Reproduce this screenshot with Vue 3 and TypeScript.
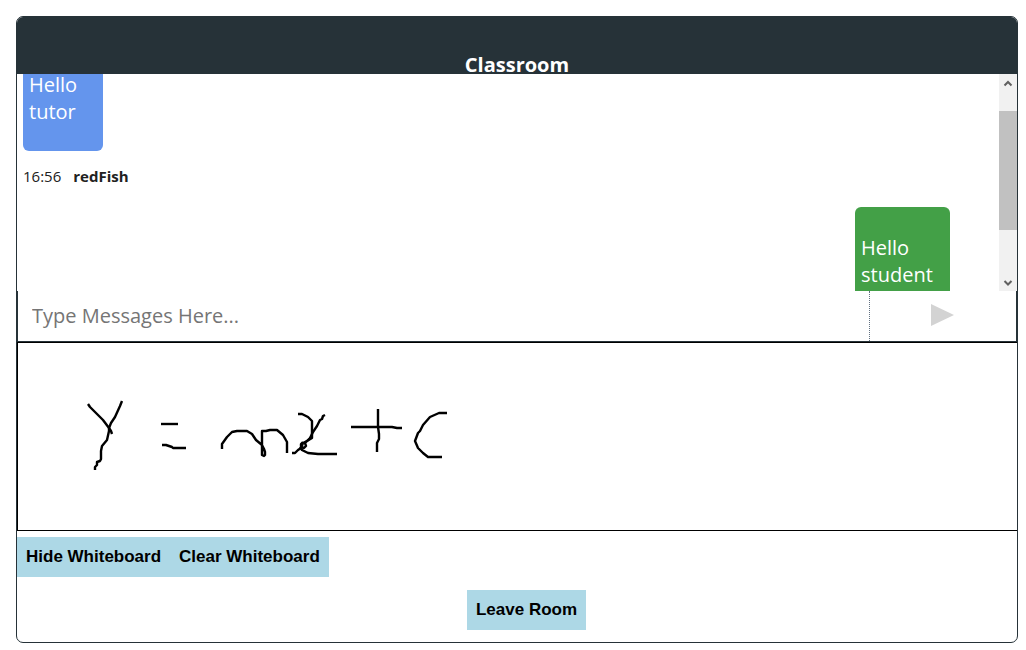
<script setup lang="ts">
import { computed, nextTick, onMounted, ref } from 'vue'

interface Message {
  text: string
  time: string
  author: string
  mine: boolean
}

const messages = ref<Message[]>([
  { text: 'Hello tutor', time: '16:56', author: 'redFish', mine: false },
  { text: 'Hello student', time: '', author: '', mine: true },
])

const draft = ref('')
const boardVisible = ref(true)
const list = ref<HTMLElement | null>(null)
const thumbTop = ref(0)
const thumbSize = ref(0)

const strokes = ref<string[]>([
  '70,61 72,64 77,69 85,77 88,81 91,85 93,88 94,91',
  '104,58 102,63 97,74 93,80 91,85 91,88 89,97 84,103 83,108 83,116 82,118 79,119 79,122 77,124 77,127',
  '143,81 160,81',
  '144,102 148,102 154,104 155,105 168,105',
  '204,106 204,101 209,94 214,89 219,88 229,88 234,91 238,97 244,102 246,106 247,109 247,112 246,113 244,112 244,88 248,88 252,87 259,87 265,92 269,99 269,110',
  '280,71 284,71 290,74 294,78 294,95 289,98 287,100 288,103 286,105 283,104 283,101 285,99',
  '307,72 305,73 304,76 302,77 299,83 295,89 292,95 289,98 285,100 283,105 280,107 277,110 274,110',
  '282,104 284,107 290,110 300,111 319,111',
  '333,84 374,84 379,85 384,85',
  '360,66 360,84 361,91 361,96 359,100 359,109',
  '429,70 421,70 412,74 405,82 402,88 400,90 397,98 400,105 405,110 410,114 424,114',
])

const thumbStyle = computed(() => ({
  top: `${thumbTop.value}%`,
  height: `${thumbSize.value}%`,
}))

function syncThumb() {
  const el = list.value
  if (!el) return
  thumbSize.value = (el.clientHeight / el.scrollHeight) * 100
  thumbTop.value = (el.scrollTop / el.scrollHeight) * 100
}

function scrollList(step: number) {
  list.value?.scrollBy({ top: step })
}

async function send() {
  if (!draft.value.trim()) return
  messages.value.push({ text: draft.value, time: '', author: '', mine: true })
  draft.value = ''
  await nextTick()
  syncThumb()
}

onMounted(() => {
  if (list.value) list.value.scrollTop = 34
  syncThumb()
})
</script>

<template>
  <main class="room">
    <header class="header">
      <h1 class="title">Classroom</h1>
    </header>

    <section class="chat">
      <div ref="list" class="messages" @scroll="syncThumb">
        <article v-for="(m, i) in messages" :key="i" class="message" :class="{ mine: m.mine }">
          <p class="bubble">{{ m.text }}</p>
          <div class="meta">
            <span>{{ m.time }}</span>
            <strong>{{ m.author }}</strong>
          </div>
        </article>
      </div>
      <div class="scrollbar">
        <button class="arrow" type="button" aria-label="Scroll up" @click="scrollList(-40)">
          <svg width="18" height="18" viewBox="0 0 18 18"><path d="M5.5 11.5 9 8l3.5 3.5" /></svg>
        </button>
        <div class="track"><div class="thumb" :style="thumbStyle"></div></div>
        <button class="arrow" type="button" aria-label="Scroll down" @click="scrollList(40)">
          <svg width="18" height="18" viewBox="0 0 18 18"><path d="M5.5 8 9 11.5 12.5 8" /></svg>
        </button>
      </div>
    </section>

    <form class="composer" @submit.prevent="send">
      <input v-model="draft" class="field" type="text" aria-label="Message" placeholder="Type Messages Here..." />
      <button class="send" type="submit" aria-label="Send">
        <svg width="23" height="22" viewBox="0 0 23 22"><path d="M0 0 23 11 0 22z" /></svg>
      </button>
    </form>

    <section v-if="boardVisible" class="board">
      <svg class="canvas" role="img" aria-label="Whiteboard">
        <polyline v-for="(s, i) in strokes" :key="i" :points="s" />
      </svg>
    </section>

    <div class="tools">
      <button class="action" type="button" @click="boardVisible = !boardVisible">Hide Whiteboard</button>
      <button class="action" type="button" @click="strokes = []">Clear Whiteboard</button>
    </div>
    <div class="exit">
      <button class="action" type="button">Leave Room</button>
    </div>
  </main>
</template>

<style>
body {
  background: #fff;
}
</style>

<style scoped>
.room {
  margin: 16px 8px 0 16px;
  border: 1px solid #263238;
  border-radius: 7px;
  overflow: hidden;
  font-family: 'Open Sans', 'Noto Sans', sans-serif;
  color: #212121;
}
.header {
  box-sizing: border-box;
  height: 57px;
  padding-top: 34px;
  overflow: hidden;
  background: #263238;
  text-align: center;
}
.title {
  margin: 0;
  font-size: 20px;
  line-height: 27px;
  font-weight: 700;
  color: #fff;
}
.chat {
  display: flex;
  height: 217px;
}
.messages {
  flex: 1;
  min-width: 0;
  overflow-y: auto;
  scrollbar-width: none;
  padding: 4px 49px 0 6px;
}
.message {
  display: flex;
  flex-direction: column;
  align-items: flex-start;
}
.message.mine {
  align-items: flex-end;
}
.bubble {
  box-sizing: border-box;
  width: 80px;
  margin: 0;
  padding: 27px 6px 26px;
  border-radius: 6px;
  background: #6495ed;
  color: #fff;
  font-size: 20px;
  line-height: 27px;
}
.mine .bubble {
  width: 95px;
  background: #43a047;
}
.meta {
  display: flex;
  gap: 12px;
  box-sizing: border-box;
  height: 56px;
  padding-top: 15px;
  font-size: 15px;
  line-height: 20px;
}
.meta strong {
  font-weight: 700;
}
.scrollbar {
  display: flex;
  flex-direction: column;
  width: 18px;
  background: #f1f1f1;
}
.arrow {
  display: block;
  height: 18px;
  padding: 0;
  border: 0;
  background: none;
}
.arrow svg {
  display: block;
  fill: none;
  stroke: #606060;
  stroke-width: 2;
}
.track {
  position: relative;
  flex: 1;
}
.thumb {
  position: absolute;
  left: 0;
  right: 0;
  background: #c1c1c1;
}
.composer {
  display: flex;
  height: 50px;
  border: 1px solid #263238;
  border-top: 0;
}
.field {
  flex: 1;
  min-width: 0;
  padding: 0 14px 2px;
  border: 0;
  outline: 0;
  background: #fff;
  font-family: inherit;
  font-size: 20px;
  color: #212121;
}
.field::placeholder {
  color: #757575;
  opacity: 1;
}
.send {
  display: flex;
  align-items: center;
  justify-content: center;
  width: 147px;
  padding: 0 2px 2px 0;
  border: 0;
  border-left: 1px dotted #607080;
  background: #fff;
}
.send svg {
  fill: #d3d3d3;
}
.board {
  height: 187px;
  border: 1px solid #000;
  border-right: 0;
}
.canvas {
  display: block;
  width: 100%;
  height: 100%;
  fill: none;
  stroke: #000;
  stroke-width: 2.4;
  stroke-linejoin: round;
}
.tools {
  display: flex;
  margin-top: 6px;
}
.exit {
  display: flex;
  justify-content: center;
  margin: 13px 0 12px;
  padding-left: 19px;
}
.action {
  height: 40px;
  padding: 0 9px;
  border: 0;
  background: #add8e6;
  color: #000;
  font-family: 'Liberation Sans', Arial, sans-serif;
  font-size: 17px;
  font-weight: 700;
}
</style>
